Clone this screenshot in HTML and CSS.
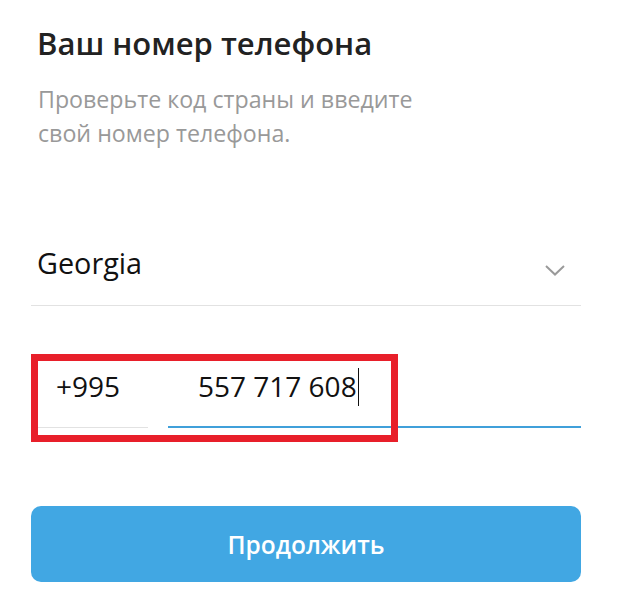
FILE: index.html
```html
<!DOCTYPE html>
<html lang="ru">
<head>
    <meta charset="UTF-8">
    <meta name="viewport" content="width=device-width, initial-scale=1.0">
    <title>Ваш номер телефона</title>
    <link rel="stylesheet" href="styles.css">
</head>
<body>
    <main class="login">
        <h1 class="title">Ваш номер телефона</h1>
        <p class="hint">Проверьте код страны и введите<br>свой номер телефона.</p>

        <div class="country">
            <span class="country-name">Georgia</span>
            <svg class="chevron" width="20" height="11" viewBox="0 0 20 11">
                <path d="M1 1 L10 9.5 L19 1" fill="none" stroke="#9a9a9a" stroke-width="2"/>
            </svg>
        </div>

        <div class="phone">
            <div class="phone-code">+995</div>
            <div class="phone-number">557 717 608<span class="caret"></span></div>
            <div class="highlight"></div>
        </div>

        <button class="next">Продолжить</button>
    </main>
</body>
</html>
```

FILE: styles.css
```css
body {
    margin: 0;
    background: #fff;
    font-family: "Open Sans", sans-serif;
}

.login {
    width: 550px;
    padding-left: 31px;
}

.title {
    margin: 0;
    padding: 23px 0 0 6px;
    font-size: 31px;
    font-weight: 600;
    line-height: 40px;
    color: #222;
}

.hint {
    margin: 19px 0 0;
    padding-left: 7px;
    font-size: 23.2px;
    line-height: 34px;
    color: #999;
}

.country {
    display: flex;
    justify-content: space-between;
    align-items: flex-start;
    margin-top: 80px;
    padding: 16px 0 25px 6px;
    border-bottom: 1px solid #e2e2e2;
}

.country-name {
    font-size: 28.8px;
    line-height: 34px;
    color: #111;
}

.chevron {
    margin: 19px 16px 0 0;
}

.phone {
    position: relative;
    display: flex;
    gap: 20px;
    margin-top: 62px;
    font-size: 28px;
    line-height: 36px;
    color: #111;
}

.phone-code {
    width: 92px;
    padding: 0 0 21px 25px;
    border-bottom: 1px solid #e2e2e2;
}

.phone-number {
    flex: 1;
    padding: 0 0 20px 30px;
    border-bottom: 2px solid #40a0da;
}

.caret {
    display: inline-block;
    width: 1px;
    height: 38px;
    margin-left: 1px;
    vertical-align: -9px;
    background: #111;
}

.highlight {
    position: absolute;
    left: 0;
    top: -14px;
    width: 367px;
    height: 88px;
    box-sizing: border-box;
    border: 7px solid #e81f2a;
}

.next {
    display: block;
    width: 100%;
    height: 76px;
    margin-top: 78px;
    border: none;
    border-radius: 10px;
    background: #41a7e3;
    color: #fff;
    font-family: inherit;
    font-size: 24.5px;
    font-weight: 600;
}
```
